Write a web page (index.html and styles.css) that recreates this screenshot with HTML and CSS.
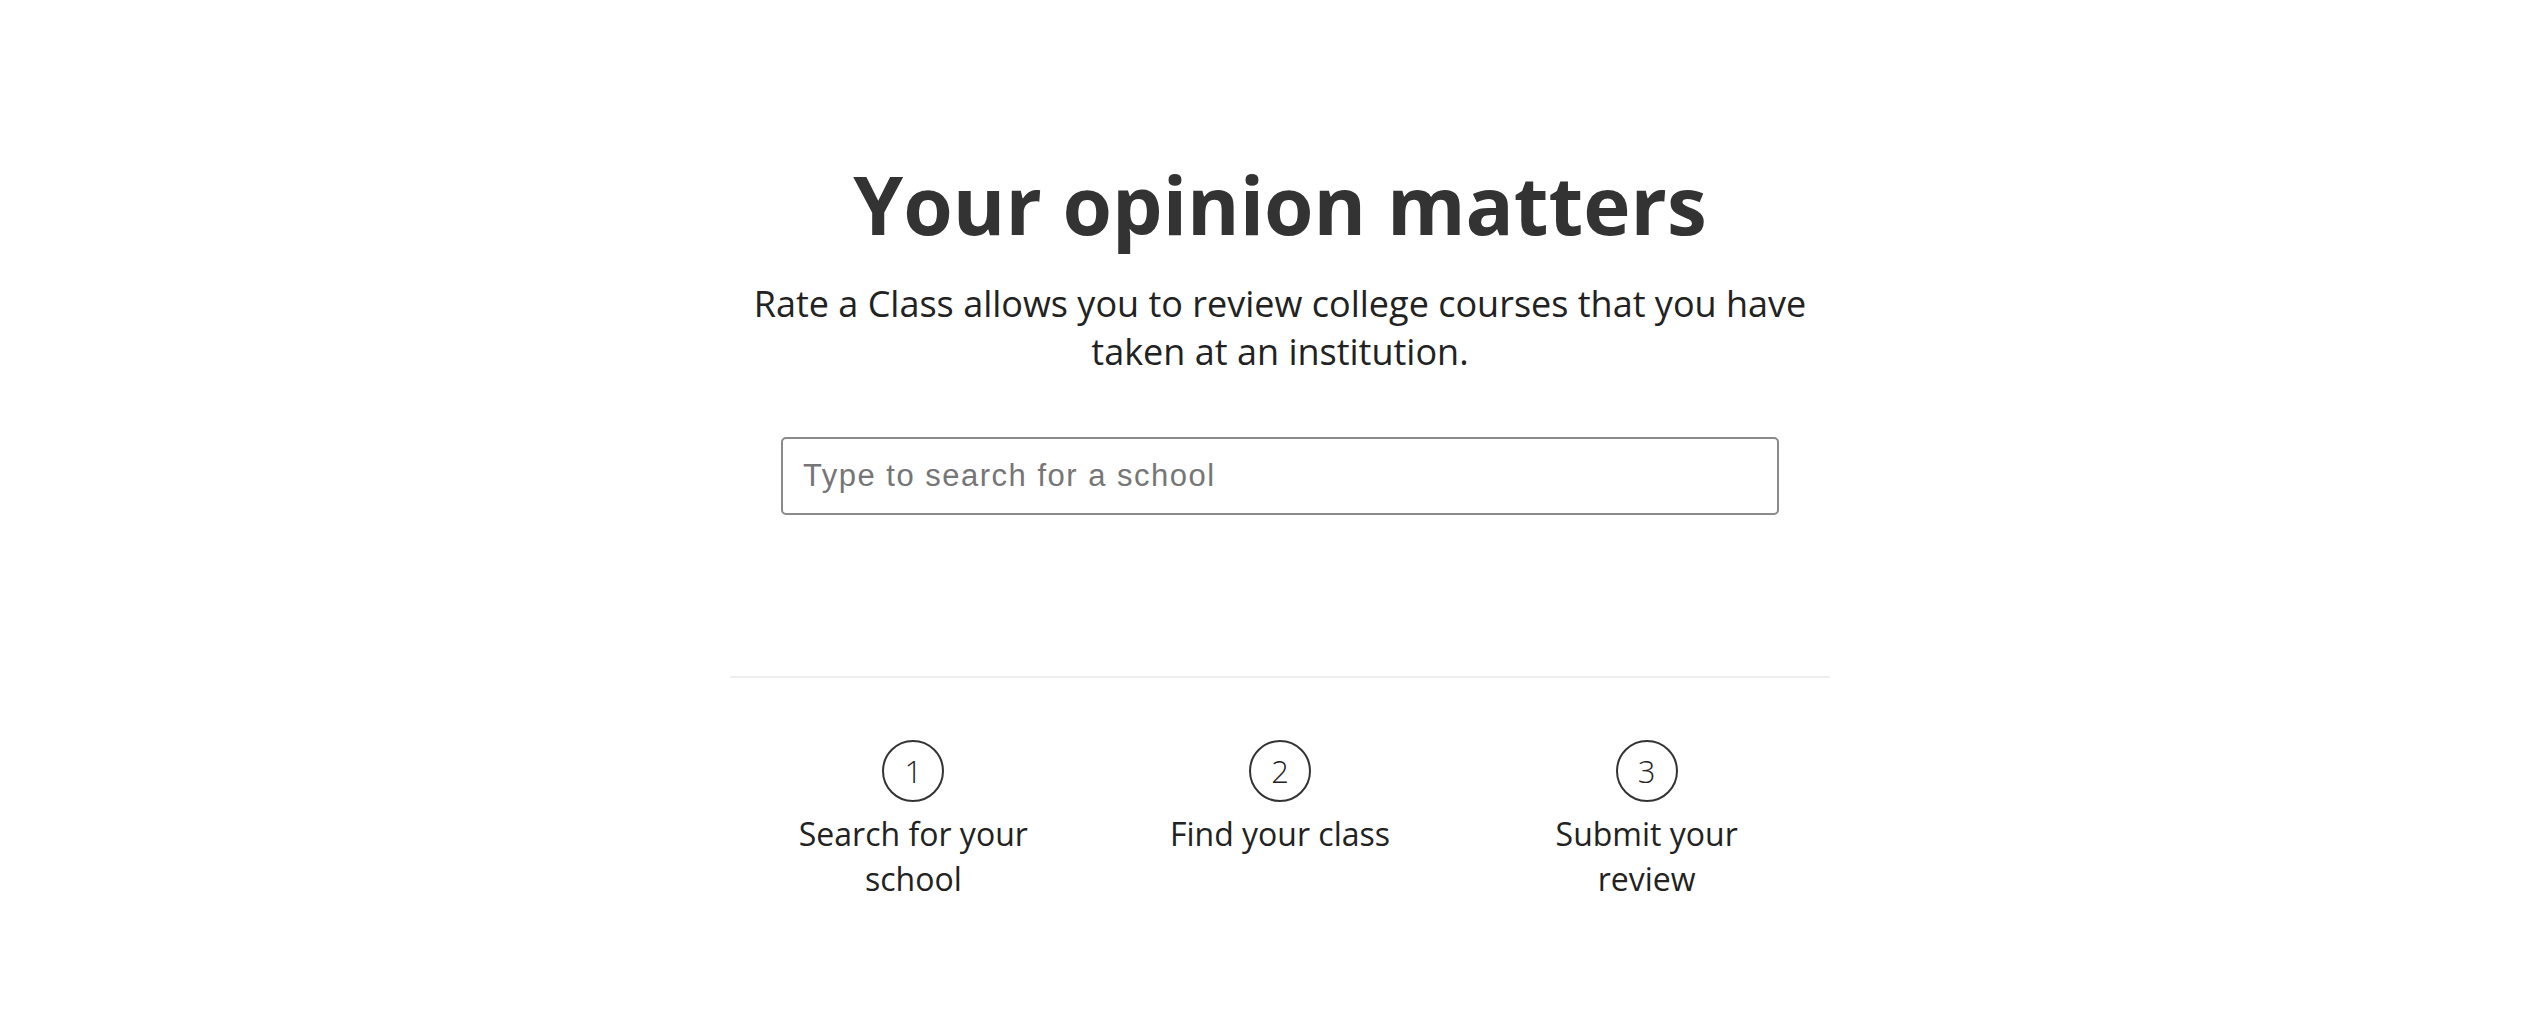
FILE: index.html
```html
<!DOCTYPE html>
<html lang="en">
<head>
<meta charset="utf-8">
<title>Rate a Class</title>
<link rel="stylesheet" href="styles.css">
</head>
<body>
<div class="page">
  <main class="container">
    <section class="hero">
      <h1 class="title">Your opinion matters</h1>
      <p class="lead">Rate a Class allows you to review college courses that you have taken at an institution.</p>
      <div class="search">
        <input class="search-input" type="text" placeholder="Type to search for a school">
      </div>
    </section>
    <hr class="divider">
    <section class="steps">
      <div class="step">
        <div class="step-num">1</div>
        <div class="step-label">Search for your school</div>
      </div>
      <div class="step">
        <div class="step-num">2</div>
        <div class="step-label">Find your class</div>
      </div>
      <div class="step">
        <div class="step-num">3</div>
        <div class="step-label">Submit your review</div>
      </div>
    </section>
  </main>
</div>
</body>
</html>
```

FILE: styles.css
```css
* { box-sizing: border-box; }
html, body { margin: 0; padding: 0; background: #fff; }
body {
  font-family: "Open Sans", "Liberation Sans", sans-serif;
  color: #212529;
}
.page {
  padding-left: 36px;
  padding-top: 156px;
}
.container {
  width: 1100px;
  margin: 0 auto;
}
.hero {
  display: flex;
  flex-direction: column;
  align-items: center;
  text-align: center;
}
.title {
  margin: 0;
  font-size: 80px;
  line-height: 96px;
  font-weight: 700;
  color: #333;
}
.lead {
  margin: 28px 0 0;
  font-size: 36px;
  line-height: 48px;
  font-weight: 400;
  color: #222;
}
.search {
  margin-top: 61px;
  width: 998px;
}
.search-input {
  display: block;
  width: 100%;
  height: 78px;
  border: 2px solid #8a8a8a;
  border-radius: 5px;
  padding: 0 20px;
  font-family: "Liberation Sans", Arial, sans-serif;
  font-size: 31px;
  letter-spacing: 1.5px;
  color: #333;
  background: #fff;
  outline: none;
}
.search-input::placeholder { color: #767676; }
.divider {
  margin: 161px 0 0;
  border: 0;
  border-top: 2px solid #eeeeee;
  height: 0;
}
.steps {
  display: grid;
  grid-template-columns: repeat(3, 1fr);
  margin-top: 62px;
}
.step {
  display: flex;
  flex-direction: column;
  align-items: center;
  text-align: center;
}
.step-num {
  width: 62px;
  height: 62px;
  border: 2px solid #333;
  border-radius: 50%;
  display: flex;
  align-items: center;
  justify-content: center;
  font-size: 31px;
  font-weight: 300;
  color: #222;
  line-height: 1;
}
.step-label {
  margin-top: 9px;
  max-width: 260px;
  font-size: 32px;
  line-height: 45px;
  color: #222;
}
```
